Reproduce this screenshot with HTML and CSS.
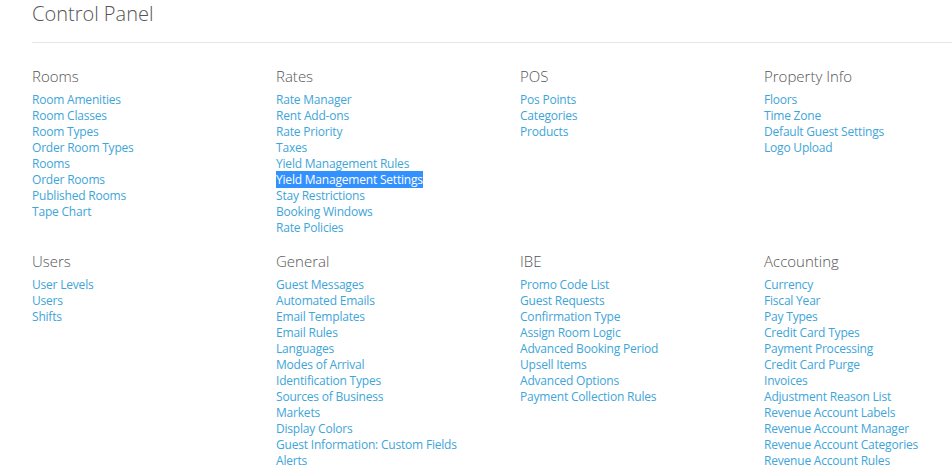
FILE: index.html
```html
<!DOCTYPE html>
<html>
<head>
<meta charset="utf-8">
<link rel="stylesheet" href="styles.css">
</head>
<body>
<div class="page">
  <h1 class="title">Control Panel</h1>
  <hr class="rule">
  <div class="grid">
    <section class="group">
      <h2>Rooms</h2>
      <a>Room Amenities</a><a>Room Classes</a><a>Room Types</a><a>Order Room Types</a><a>Rooms</a><a>Order Rooms</a><a>Published Rooms</a><a>Tape Chart</a>
    </section>
    <section class="group">
      <h2>Rates</h2>
      <a>Rate Manager</a><a>Rent Add-ons</a><a>Rate Priority</a><a>Taxes</a><a>Yield Management Rules</a><a><span class="sel">Yield Management Settings</span></a><a>Stay Restrictions</a><a>Booking Windows</a><a>Rate Policies</a>
    </section>
    <section class="group">
      <h2>POS</h2>
      <a>Pos Points</a><a>Categories</a><a>Products</a>
    </section>
    <section class="group">
      <h2>Property Info</h2>
      <a>Floors</a><a>Time Zone</a><a>Default Guest Settings</a><a>Logo Upload</a>
    </section>
    <section class="group">
      <h2>Users</h2>
      <a>User Levels</a><a>Users</a><a>Shifts</a>
    </section>
    <section class="group">
      <h2>General</h2>
      <a>Guest Messages</a><a>Automated Emails</a><a>Email Templates</a><a>Email Rules</a><a>Languages</a><a>Modes of Arrival</a><a>Identification Types</a><a>Sources of Business</a><a>Markets</a><a>Display Colors</a><a>Guest Information: Custom Fields</a><a>Alerts</a>
    </section>
    <section class="group">
      <h2>IBE</h2>
      <a>Promo Code List</a><a>Guest Requests</a><a>Confirmation Type</a><a>Assign Room Logic</a><a>Advanced Booking Period</a><a>Upsell Items</a><a>Advanced Options</a><a>Payment Collection Rules</a>
    </section>
    <section class="group">
      <h2>Accounting</h2>
      <a>Currency</a><a>Fiscal Year</a><a>Pay Types</a><a>Credit Card Types</a><a>Payment Processing</a><a>Credit Card Purge</a><a>Invoices</a><a>Adjustment Reason List</a><a>Revenue Account Labels</a><a>Revenue Account Manager</a><a>Revenue Account Categories</a><a>Revenue Account Rules</a>
    </section>
  </div>
</div>
</body>
</html>
```
FILE: styles.css
```css
html, body {
  margin: 0;
  padding: 0;
  background: #ffffff;
}
body {
  font-family: "Open Sans", "Liberation Sans", sans-serif;
  color: #555555;
  overflow: hidden;
}
.page {
  padding-left: 32px;
}
.title {
  margin: 0;
  font-size: 20px;
  font-weight: 300;
  line-height: 28px;
  color: #555555;
}
.rule {
  margin: 14px 0 0 0;
  border: 0;
  border-top: 1px solid #e6e6e6;
  height: 0;
}
.grid {
  display: grid;
  grid-template-columns: 244px 244px 244px 1fr;
  row-gap: 14px;
  padding-top: 22px;
}
.group {
  display: flex;
  flex-direction: column;
  align-items: flex-start;
}
.group h2 {
  margin: 0 0 5px 0;
  font-size: 15px;
  font-weight: 300;
  line-height: 22px;
  color: #555555;
}
.group a {
  font-size: 12px;
  line-height: 16px;
  letter-spacing: -0.2px;
  color: #3ea5d9;
  text-decoration: none;
}
.sel {
  background: #3390ff;
  color: #ffffff;
}
```
